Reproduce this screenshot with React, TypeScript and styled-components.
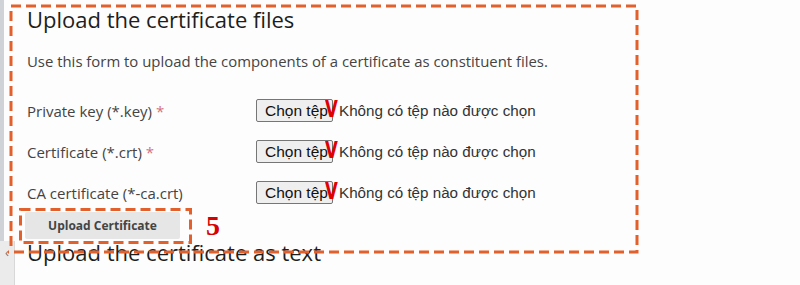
import styled, { createGlobalStyle } from "styled-components";

const GlobalStyle = createGlobalStyle`
  html, body {
    margin: 0;
    padding: 0;
    background: #fdfdfd;
  }
  body {
    font-family: "Open Sans", "DejaVu Sans", sans-serif;
    color: #444;
  }
`;

const Page = styled.div`
  position: relative;
  width: 800px;
  height: 285px;
  overflow: hidden;
  display: flex;
`;

const Rail = styled.div`
  width: 15px;
  flex: none;
  display: flex;
  flex-direction: column;
`;

const RailTop = styled.div`
  flex: 1;
  border-left: 4px solid #cfd2d6;
`;

const RailBottom = styled.div`
  height: 44px;
  background: #ebebeb;
  border-right: 1px solid #d8d8d8;
  color: #777;
  font-size: 13px;
  line-height: 1;
  padding: 5px 0 0 5px;
  box-sizing: border-box;
`;

const Main = styled.div`
  flex: 1;
  padding: 4px 0 0 12px;
`;

const Title = styled.h2`
  margin: 0;
  font-size: 22px;
  font-weight: 500;
  line-height: 30px;
  color: #1e1e1e;
`;

const Intro = styled.p`
  margin: 17px 0 0;
  font-size: 14.9px;
  line-height: 20px;
  color: #444;
`;

const Form = styled.div`
  margin-top: 28px;
  display: flex;
  flex-direction: column;
  gap: 18px;
`;

const FieldRow = styled.div`
  display: flex;
  align-items: center;
  height: 23px;
`;

const Label = styled.span`
  width: 229px;
  font-size: 15px;
  color: #444;
`;

const Required = styled.span`
  color: #d4707e;
`;

const FileBox = styled.div`
  position: relative;
  display: flex;
  align-items: center;
  gap: 6px;
  font-family: "Liberation Sans", Arial, sans-serif;
  font-size: 15.2px;
`;

const PickButton = styled.button`
  width: 77px;
  height: 23px;
  padding: 0 0 0 8px;
  border: 1px solid #767676;
  border-radius: 2px;
  background: #efefef;
  color: #111;
  font: inherit;
  font-size: 15.5px;
  text-align: left;
  white-space: nowrap;
  overflow: visible;
`;

const NoFile = styled.span`
  color: #333;
`;

const Mark = styled.span`
  position: absolute;
  left: 69px;
  top: -1px;
  color: #e00000;
  font-family: "DejaVu Sans", "Liberation Sans", sans-serif;
  font-weight: 700;
  font-size: 23px;
  line-height: 23px;
  transform: scaleX(0.72);
  transform-origin: left center;
`;

const Submit = styled.button`
  display: block;
  margin: 8px 0 0 -2px;
  width: 155px;
  height: 27px;
  border: none;
  border-radius: 2px;
  background: #e6e6e6;
  color: #444;
  font-family: "Open Sans", sans-serif;
  font-size: 12px;
  font-weight: 700;
`;

const NextTitle = styled(Title)`
  margin-top: -2px;
`;

const Overlay = styled.svg`
  position: absolute;
  inset: 0;
  pointer-events: none;
`;

const StepNumber = styled.span`
  position: absolute;
  left: 206px;
  top: 211px;
  color: #d80000;
  font-family: "Liberation Serif", "DejaVu Serif", serif;
  font-weight: 700;
  font-size: 28px;
  line-height: 30px;
`;

const fields = [
  { label: "Private key (*.key)", required: true },
  { label: "Certificate (*.crt)", required: true },
  { label: "CA certificate (*-ca.crt)", required: false },
];

const App = () => {
  return (
    <>
      <GlobalStyle />
      <Page>
        <Rail>
          <RailTop />
          <RailBottom>‹</RailBottom>
        </Rail>
        <Main>
          <Title>Upload the certificate files</Title>
          <Intro>
            Use this form to upload the components of a certificate as constituent files.
          </Intro>
          <Form>
            {fields.map((f) => (
              <FieldRow key={f.label}>
                <Label>
                  {f.label}
                  {f.required && <Required> *</Required>}
                </Label>
                <FileBox>
                  <PickButton>Chọn tệp</PickButton>
                  <NoFile>Không có tệp nào được chọn</NoFile>
                  <Mark>V</Mark>
                </FileBox>
              </FieldRow>
            ))}
          </Form>
          <Submit>Upload Certificate</Submit>
          <NextTitle>Upload the certificate as text</NextTitle>
        </Main>
        <Overlay width="800" height="285">
          <g fill="none" stroke="#e2602b" strokeWidth="3" strokeDasharray="10 5">
            <path d="M11 246 L11 6 L637 6 L637 252 L8 252" />
            <rect x="20.5" y="209.5" width="170" height="33" />
          </g>
        </Overlay>
        <StepNumber>5</StepNumber>
      </Page>
    </>
  );
};

export default App;
